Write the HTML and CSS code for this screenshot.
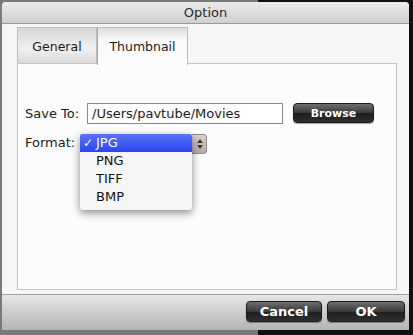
FILE: index.html
```html
<!DOCTYPE html>
<html>
<head>
    <title>Option</title>
    <link rel="stylesheet" href="styles.css">
</head>
<body>
    <div class="backdrop">
        <div class="window">
            <div class="titlebar">Option</div>
            <div class="body">
                <div class="tabs">
                    <div class="tab">General</div>
                    <div class="tab active">Thumbnail</div>
                </div>
                <div class="panel">
                    <div class="row">
                        <span class="label">Save To:</span>
                        <div class="field">/Users/pavtube/Movies</div>
                        <button class="btn browse">Browse</button>
                    </div>
                    <div class="row format-row">
                        <span class="label">Format:</span>
                        <div class="popup">
                            <div class="popup-arrows">
                                <svg width="8" height="12" viewBox="0 0 8 12"><path d="M4 1 L7 5 L1 5 Z M4 11 L7 7 L1 7 Z" fill="#3a3a3a"/></svg>
                            </div>
                            <ul class="menu">
                                <li class="selected"><span class="check">✓</span>JPG</li>
                                <li>PNG</li>
                                <li>TIFF</li>
                                <li>BMP</li>
                            </ul>
                        </div>
                    </div>
                </div>
            </div>
            <div class="footer">
                <button class="btn">Cancel</button>
                <button class="btn">OK</button>
            </div>
        </div>
    </div>
</body>
</html>
```

FILE: styles.css
```css
body {
    margin: 0;
    background: #111;
    font-family: "DejaVu Sans", "Liberation Sans", sans-serif;
    font-size: 12px;
    color: #1a1a1a;
}
.backdrop {
    width: 413px;
    height: 335px;
    padding: 2px 4px 5px 2px;
    box-sizing: border-box;
    background: linear-gradient(to right, #7a7a7a 0, #7a7a7a 258px, #111 258px);
}
.window {
    height: 100%;
    display: flex;
    flex-direction: column;
    background: #f6f6f6;
    border-radius: 4px 4px 0 0;
    overflow: hidden;
}
.titlebar {
    height: 21px;
    line-height: 22px;
    text-align: center;
    font-size: 13px;
    color: #2a2a2a;
    background: linear-gradient(#ececec, #cfcfcf);
    border-bottom: 1px solid #9a9a9a;
}
.body {
    flex: 1;
    padding: 3px 12px 4px 15px;
    display: flex;
    flex-direction: column;
}
.tabs {
    display: flex;
    height: 36px;
    position: relative;
    z-index: 1;
}
.tab {
    width: 78px;
    text-align: center;
    line-height: 37px;
    font-size: 12.5px;
    background: linear-gradient(#d6d6d6, #f0f0f0 60%, #d9d9d9);
    border: 1px solid #bdbdbd;
    border-bottom: none;
}
.tab.active {
    width: 89px;
    background: linear-gradient(#dcdcdc, #fafafa 12px, #fcfcfc);
    border-left: 1px solid #a8a8a8;
    height: 37px;
}
.panel {
    flex: 1;
    background: #fcfcfc;
    border: 1px solid #c4c4c4;
    padding: 38px 0 0 7px;
}
.row {
    display: flex;
    align-items: center;
    height: 22px;
}
.label {
    width: 62px;
    font-size: 13px;
}
.field {
    width: 190px;
    height: 19px;
    line-height: 19px;
    padding-left: 4px;
    border: 1px solid #8a8a8a;
    background: #fff;
    font-size: 13px;
    margin-right: 10px;
}
.btn {
    font-family: inherit;
    font-weight: bold;
    font-size: 12px;
    color: #fff;
    border: 1px solid #1a1a1a;
    border-radius: 4px;
    background: linear-gradient(#6e6e6e, #3a3a3a 50%, #1e1e1e 51%, #2e2e2e);
    box-shadow: 0 1px 1px rgba(0,0,0,0.35);
    height: 20px;
    padding: 0;
}
.browse {
    width: 81px;
    height: 20px;
    font-size: 11px;
}
.format-row {
    margin-top: 9px;
    align-items: flex-start;
}
.format-row .label {
    width: 55px;
    line-height: 18px;
    margin-top: 1px;
}
.popup {
    position: relative;
    width: 125px;
    height: 18px;
    margin-top: 1px;
    border: 1px solid #8e8e8e;
    border-radius: 3px;
    background: linear-gradient(#d8d0d0, #b8a8a8);
}
.popup-arrows {
    position: absolute;
    right: 0;
    top: 0;
    width: 13px;
    height: 18px;
    display: flex;
    align-items: center;
    justify-content: center;
}
.menu {
    position: absolute;
    left: -1px;
    top: -1px;
    width: 112px;
    margin: 0;
    padding: 0 0 4px;
    list-style: none;
    background: rgba(246, 246, 246, 0.97);
    border-radius: 0 0 4px 4px;
    box-shadow: 0 3px 8px rgba(0,0,0,0.45);
}
.menu li {
    height: 18px;
    line-height: 18px;
    padding-left: 16px;
    font-size: 13px;
    color: #111;
}
.menu li.selected {
    background: linear-gradient(#5a72f8, #2b45f0);
    color: #fff;
    position: relative;
    border-radius: 2px 2px 0 0;
}
.check {
    position: absolute;
    left: 3px;
    font-size: 12px;
}
.footer {
    height: 33px;
    background: linear-gradient(#e6e6e6, #cdcdcd 50%, #b5b5b5);
    border-top: 1px solid #a0a0a0;
    display: flex;
    justify-content: flex-end;
    align-items: center;
    gap: 5px;
    padding: 0 4px 2px 0;
}
.footer .btn {
    width: 76px;
    height: 21px;
    font-size: 13px;
}
.footer .btn:last-child {
    width: 78px;
}
```
